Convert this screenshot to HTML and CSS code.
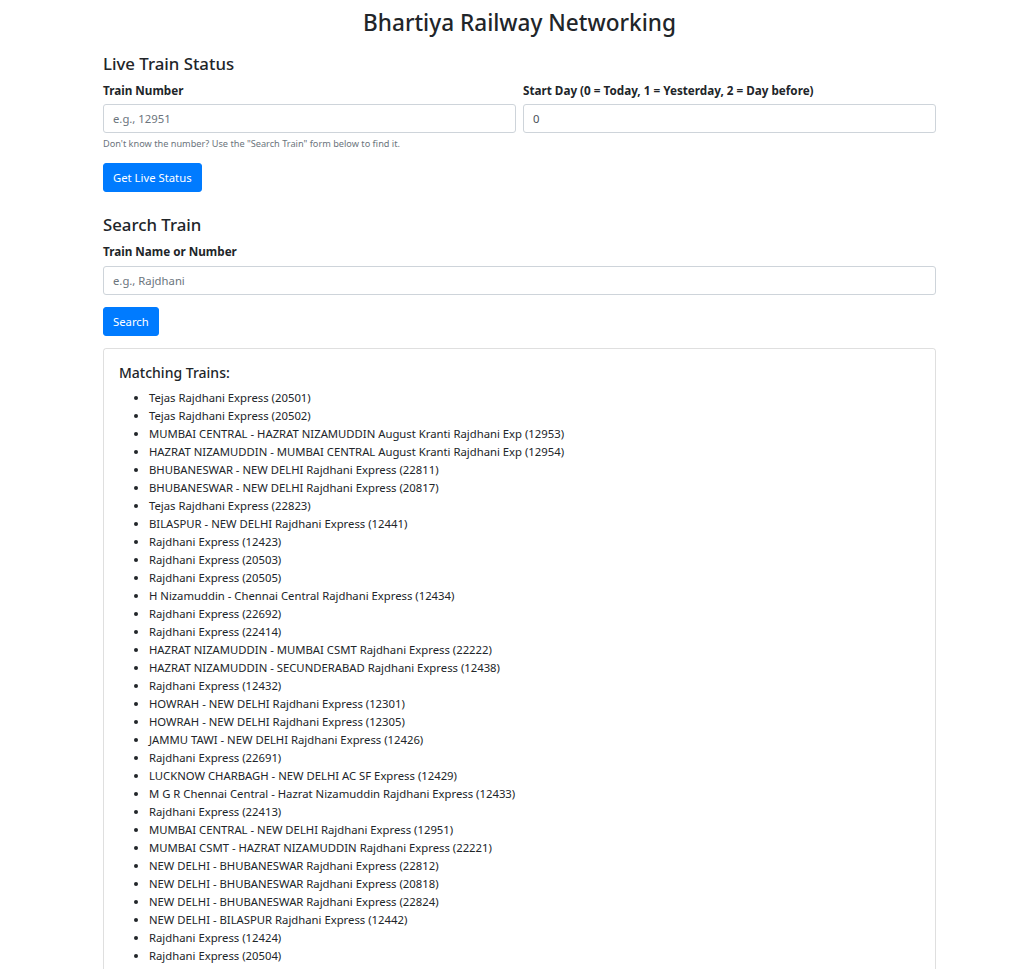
FILE: index.html
```html
<!DOCTYPE html>
<html lang="en">
<head>
<meta charset="utf-8">
<title>Bhartiya Railway Networking</title>
<link rel="stylesheet" href="styles.css">
</head>
<body>
<div class="container">
  <h1 class="title">Bhartiya Railway Networking</h1>

  <section class="section">
    <h4 class="section-title">Live Train Status</h4>
    <div class="form-row">
      <div class="form-group">
        <label class="label" for="trainNumber">Train Number</label>
        <input class="form-control" id="trainNumber" type="text" placeholder="e.g., 12951">
        <small class="help">Don't know the number? Use the "Search Train" form below to find it.</small>
      </div>
      <div class="form-group">
        <label class="label" for="startDay">Start Day (0 = Today, 1 = Yesterday, 2 = Day before)</label>
        <input class="form-control" id="startDay" type="text" value="0">
      </div>
    </div>
    <button class="btn" type="button">Get Live Status</button>
  </section>

  <section class="section section-search">
    <h4 class="section-title">Search Train</h4>
    <div class="form-group">
      <label class="label" for="trainName">Train Name or Number</label>
      <input class="form-control" id="trainName" type="text" placeholder="e.g., Rajdhani">
    </div>
    <button class="btn" type="button">Search</button>
  </section>

  <div class="card">
    <h5 class="card-title">Matching Trains:</h5>
    <ul class="train-list">
      <li>Tejas Rajdhani Express (20501)</li>
      <li>Tejas Rajdhani Express (20502)</li>
      <li>MUMBAI CENTRAL - HAZRAT NIZAMUDDIN August Kranti Rajdhani Exp (12953)</li>
      <li>HAZRAT NIZAMUDDIN - MUMBAI CENTRAL August Kranti Rajdhani Exp (12954)</li>
      <li>BHUBANESWAR - NEW DELHI Rajdhani Express (22811)</li>
      <li>BHUBANESWAR - NEW DELHI Rajdhani Express (20817)</li>
      <li>Tejas Rajdhani Express (22823)</li>
      <li>BILASPUR - NEW DELHI Rajdhani Express (12441)</li>
      <li>Rajdhani Express (12423)</li>
      <li>Rajdhani Express (20503)</li>
      <li>Rajdhani Express (20505)</li>
      <li>H Nizamuddin - Chennai Central Rajdhani Express (12434)</li>
      <li>Rajdhani Express (22692)</li>
      <li>Rajdhani Express (22414)</li>
      <li>HAZRAT NIZAMUDDIN - MUMBAI CSMT Rajdhani Express (22222)</li>
      <li>HAZRAT NIZAMUDDIN - SECUNDERABAD Rajdhani Express (12438)</li>
      <li>Rajdhani Express (12432)</li>
      <li>HOWRAH - NEW DELHI Rajdhani Express (12301)</li>
      <li>HOWRAH - NEW DELHI Rajdhani Express (12305)</li>
      <li>JAMMU TAWI - NEW DELHI Rajdhani Express (12426)</li>
      <li>Rajdhani Express (22691)</li>
      <li>LUCKNOW CHARBAGH - NEW DELHI AC SF Express (12429)</li>
      <li>M G R Chennai Central - Hazrat Nizamuddin Rajdhani Express (12433)</li>
      <li>Rajdhani Express (22413)</li>
      <li>MUMBAI CENTRAL - NEW DELHI Rajdhani Express (12951)</li>
      <li>MUMBAI CSMT - HAZRAT NIZAMUDDIN Rajdhani Express (22221)</li>
      <li>NEW DELHI - BHUBANESWAR Rajdhani Express (22812)</li>
      <li>NEW DELHI - BHUBANESWAR Rajdhani Express (20818)</li>
      <li>NEW DELHI - BHUBANESWAR Rajdhani Express (22824)</li>
      <li>NEW DELHI - BILASPUR Rajdhani Express (12442)</li>
      <li>Rajdhani Express (12424)</li>
      <li>Rajdhani Express (20504)</li>
    </ul>
  </div>
</div>
</body>
</html>
```

FILE: styles.css
```css
* {
  box-sizing: border-box;
}

html {
  font-size: 12px;
}

body {
  margin: 0;
  font-family: "Noto Sans", "Open Sans", sans-serif;
  font-size: 11.3px;
  line-height: 18px;
  color: #212529;
  background: #fff;
}

.container {
  width: 833px;
  margin: 0 0 0 103px;
  padding-top: 8px;
}

.title {
  margin: 0 0 16px;
  font-size: 22.6px;
  font-weight: 500;
  line-height: 29px;
  text-align: center;
}

.section-title {
  margin: 0 0 6px;
  font-size: 16.8px;
  font-weight: 500;
  line-height: 22px;
}

.form-row {
  display: grid;
  grid-template-columns: 1fr 1fr;
  column-gap: 7px;
}

.form-group {
  margin-bottom: 12px;
}

.label {
  display: block;
  margin-bottom: 5px;
  font-size: 11.7px;
  font-weight: 700;
}

.section-search .label {
  margin-bottom: 6px;
}

.form-control {
  display: block;
  width: 100%;
  height: 29px;
  padding: 4px 9px;
  font-family: inherit;
  font-size: 11.3px;
  line-height: 18px;
  color: #495057;
  background: #fff;
  border: 1px solid #ced4da;
  border-radius: 3px;
}

.form-control::placeholder {
  color: #6c757d;
}

.help {
  display: block;
  margin-top: 4px;
  font-size: 9.2px;
  line-height: 14px;
  color: #6c757d;
}

.btn {
  display: inline-block;
  height: 29px;
  padding: 0 9px;
  font-family: inherit;
  font-size: 11.3px;
  line-height: 27px;
  color: #fff;
  background: #007bff;
  border: 1px solid #007bff;
  border-radius: 3px;
}

.section {
  margin-bottom: 22px;
}

.section-search {
  margin-bottom: 12px;
}

.card {
  border: 1px solid rgba(0, 0, 0, 0.125);
  border-radius: 3px;
  padding: 15px;
}

.card-title {
  margin: 0 0 7px;
  font-size: 14px;
  font-weight: 500;
  line-height: 18px;
}

.train-list {
  margin: 0;
  padding-left: 30px;
}
```
